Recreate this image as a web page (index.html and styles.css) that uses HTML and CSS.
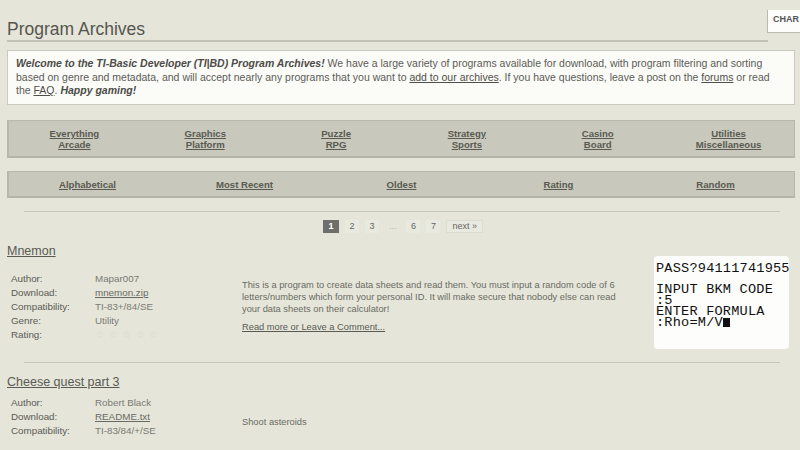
FILE: index.html
```html
<!DOCTYPE html>
<html>
<head>
<meta charset="utf-8">
<link rel="stylesheet" href="styles.css">
</head>
<body>
<div class="page">
  <div class="char-tab">CHAR</div>
  <h1 class="title">Program Archives</h1>
  <div class="intro">
    <b><i>Welcome to the TI-Basic Developer (TI|BD) Program Archives!</i></b> We have a large variety of programs available for download, with program filtering and sorting based on genre and metadata, and will accept nearly any programs that you want to <a href="#">add to our archives</a>. If you have questions, leave a post on the <a href="#">forums</a> or read the <a href="#">FAQ</a>. <b><i>Happy gaming!</i></b>
  </div>
  <div class="bar genres">
    <div class="cell"><a href="#">Everything</a><a href="#">Arcade</a></div>
    <div class="cell"><a href="#">Graphics</a><a href="#">Platform</a></div>
    <div class="cell"><a href="#">Puzzle</a><a href="#">RPG</a></div>
    <div class="cell"><a href="#">Strategy</a><a href="#">Sports</a></div>
    <div class="cell"><a href="#">Casino</a><a href="#">Board</a></div>
    <div class="cell"><a href="#">Utilities</a><a href="#">Miscellaneous</a></div>
  </div>
  <div class="bar sorts">
    <div class="cell"><a href="#">Alphabetical</a></div>
    <div class="cell"><a href="#">Most Recent</a></div>
    <div class="cell"><a href="#">Oldest</a></div>
    <div class="cell"><a href="#">Rating</a></div>
    <div class="cell"><a href="#">Random</a></div>
  </div>
  <hr class="divider">
  <div class="pager">
    <span class="pg current">1</span>
    <span class="pg">2</span>
    <span class="pg">3</span>
    <span class="pg dots">...</span>
    <span class="pg">6</span>
    <span class="pg">7</span>
    <span class="pg next">next »</span>
  </div>

  <div class="program first">
    <a class="prog-title" href="#">Mnemon</a>
    <div class="prog-body">
      <div class="meta">
        <span class="lbl">Author:</span><span class="val">Mapar007</span>
        <span class="lbl">Download:</span><span class="val"><a href="#">mnemon.zip</a></span>
        <span class="lbl">Compatibility:</span><span class="val">TI-83+/84/SE</span>
        <span class="lbl">Genre:</span><span class="val">Utility</span>
        <span class="lbl">Rating:</span><span class="val stars">☆☆☆☆☆</span>
      </div>
      <div class="desc">
        <p>This is a program to create data sheets and read them. You must input a random code of 6 letters/numbers which form your personal ID. It will make secure that nobody else can read your data sheets on their calculator!</p>
        <a href="#">Read more or Leave a Comment...</a>
      </div>
      <div class="shot">
        <div class="line">PASS?94111741955</div>
        <div class="line">&nbsp;</div>
        <div class="line">INPUT BKM CODE</div>
        <div class="line">:5</div>
        <div class="line">ENTER FORMULA</div>
        <div class="line">:Rho=M/V<span class="cursor"></span></div>
      </div>
    </div>
  </div>
  <hr class="divider second">
  <div class="program second-prog">
    <a class="prog-title" href="#">Cheese quest part 3</a>
    <div class="prog-body">
      <div class="meta">
        <span class="lbl">Author:</span><span class="val">Robert Black</span>
        <span class="lbl">Download:</span><span class="val"><a href="#">README.txt</a></span>
        <span class="lbl">Compatibility:</span><span class="val">TI-83/84/+/SE</span>
      </div>
      <div class="desc desc2">
        <p>Shoot asteroids</p>
      </div>
    </div>
  </div>
</div>
</body>
</html>
```
FILE: styles.css
```css
* { box-sizing: border-box; }
html, body { margin: 0; padding: 0; }
body {
  background: #e5e6d9;
  font-family: "Liberation Sans", Arial, sans-serif;
  color: #5a5a55;
  width: 800px;
  height: 450px;
  overflow: hidden;
}
a { color: #4f4f4a; text-decoration: underline; }
.page { position: relative; padding: 0 5px 0 7px; }
.char-tab {
  position: absolute;
  top: 10px;
  left: 767px;
  width: 40px;
  height: 23px;
  background: #fdfdfb;
  border-left: 1px solid #b9bab0;
  border-bottom: 1px solid #b9bab0;
  font-size: 9px;
  font-weight: bold;
  color: #555;
  padding: 4px 0 0 5px;
}
.title {
  margin: 0;
  padding-top: 19px;
  width: 761px;
  font-size: 17.5px;
  font-weight: normal;
  color: #555550;
  line-height: 20px;
  padding-bottom: 1px;
  border-bottom: 2px solid #c3c4b8;
}
.intro {
  margin-top: 8px;
  background: #fbfbf7;
  border: 1px solid #c9cac0;
  padding: 6px 18px 6px 8px;
  font-size: 10.5px;
  line-height: 13.6px;
  color: #5c5c58;
  height: 55px;
}
.intro b { color: #4c4c48; }
.bar {
  display: flex;
  background: #c8c9bc;
  border: 1px solid #b8b9ac;
  border-bottom: 2px solid #b4b5a8;
  border-left: 2px solid #b8b9ac;
}
.genres { margin-top: 15px; height: 38px; }
.sorts { margin-top: 13px; height: 27px; }
.cell {
  flex: 1;
  display: flex;
  flex-direction: column;
  align-items: center;
  justify-content: center;
  font-size: 9.6px;
  line-height: 11px;
}
.cell a { color: #5a5a52; font-weight: bold; }
.divider {
  border: 0;
  border-top: 1px solid #c6c7bb;
  margin: 13px 15px 0 17px;
  height: 0;
}
.pager {
  display: flex;
  justify-content: center;
  gap: 3px;
  margin-top: 8px;
  padding-left: 7px;
  font-size: 9px;
  color: #666;
}
.pg {
  height: 13px;
  line-height: 13px;
  padding: 0 4px;
  background: #e9eadf;
  min-width: 14px;
  text-align: center;
  margin-right: 3px;
}
.pg.current { background: #6f6f6a; color: #fff; font-weight: bold; width: 16px; }
.pg.dots { background: transparent; color: #bbb; }
.pg.next { padding: 0 5px; border: 1px solid #dcddd2; line-height: 11px; }
.program.first { padding-top: 8px; }
.program.second-prog { padding-top: 9px; }
.prog-title {
  display: inline-block;
  font-size: 12.5px;
  color: #5a5a55;
  line-height: 14px;
}
.prog-body {
  display: flex;
  align-items: flex-start;
}
.meta {
  display: grid;
  grid-template-columns: 84px 140px;
  padding-left: 4px;
  padding-top: 13px;
  font-size: 9.8px;
  line-height: 14px;
}
.second-prog .meta { padding-top: 6px; }
.lbl { color: #5a5a55; }
.val { color: #7a7a74; }
.val a { color: #6a6a64; }
.stars { color: #d4d5ca; letter-spacing: 4.5px; font-size: 10px; }
.desc {
  width: 392px;
  margin-left: 7px;
  padding-top: 20px;
  font-size: 9.3px;
  line-height: 12px;
  color: #6a6a64;
}
.desc p { margin: 0 0 6px 0; }
.desc a { color: #5a5a55; }
.desc2 { padding-top: 26px; }
.shot {
  margin-left: 20px;
  margin-top: -3px;
  width: 135px;
  height: 93px;
  background: #fdfdfc;
  border-radius: 4px;
  padding: 8px 0 0 2px;
  font-family: "Liberation Mono", "DejaVu Sans Mono", monospace;
  font-size: 13.6px;
  line-height: 10.7px;
  color: #111;
  letter-spacing: 0.2px;
}
.shot .line { white-space: nowrap; }
.cursor {
  display: inline-block;
  width: 7px;
  height: 9px;
  background: #111;
  vertical-align: -1px;
}
.divider.second { margin-top: 13px; }
```
